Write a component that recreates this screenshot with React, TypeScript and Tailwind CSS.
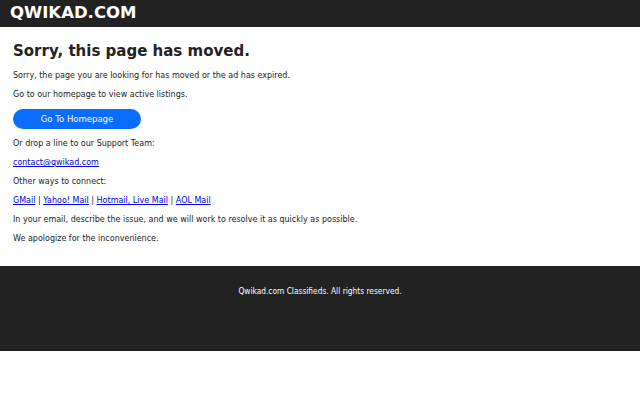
export default function App() {
  return (
    <div className="min-h-[400px] bg-white font-['DejaVu_Sans',sans-serif] text-[#222]">
      <header className="flex h-[27px] items-center bg-[#222] px-[10px]">
        <h1 className="text-[16.5px] font-bold leading-none text-white">QWIKAD.COM</h1>
      </header>

      <main className="px-[13px] pt-[14px] pb-[18px]">
        <h2 className="text-[15px] font-bold leading-[20px] text-[#222]">Sorry, this page has moved.</h2>
        <div className="mt-[5px] flex flex-col text-[8px] leading-[19px]">
          <p>Sorry, the page you are looking for has moved or the ad has expired.</p>
          <p>Go to our homepage to view active listings.</p>
          <a
            href="#"
            className="my-[5px] flex h-[20px] w-[128px] items-center justify-center rounded-full bg-[#0a6cfd] text-[8.5px] text-white"
          >
            Go To Homepage
          </a>
          <p>Or drop a line to our Support Team:</p>
          <p>
            <a href="#" className="text-[#0000ee] underline">contact@qwikad.com</a>
          </p>
          <p>Other ways to connect:</p>
          <p>
            <a href="#" className="text-[#0000ee] underline">GMail</a> |{" "}
            <a href="#" className="text-[#0000ee] underline">Yahoo! Mail</a> |{" "}
            <a href="#" className="text-[#0000ee] underline">Hotmail, Live Mail</a> |{" "}
            <a href="#" className="text-[#0000ee] underline">AOL Mail</a>
          </p>
          <p>In your email, describe the issue, and we will work to resolve it as quickly as possible.</p>
          <p>We apologize for the inconvenience.</p>
        </div>
      </main>

      <footer className="flex h-[85px] flex-col bg-[#222] text-center font-['DejaVu_Sans_Condensed','DejaVu_Sans',sans-serif] text-[8.3px] text-white">
        <p className="flex-1 pt-[19px]">Qwikad.com Classifieds. All rights reserved.</p>
        <div className="h-[1px] bg-[#2c2c2c]" />
        <div className="h-[1px] bg-[#1c1c1c]" />
        <div className="h-[1px] bg-[#2c2c2c]" />
        <div className="h-[3px] bg-[#1e1e1e]" />
      </footer>
    </div>
  );
}
